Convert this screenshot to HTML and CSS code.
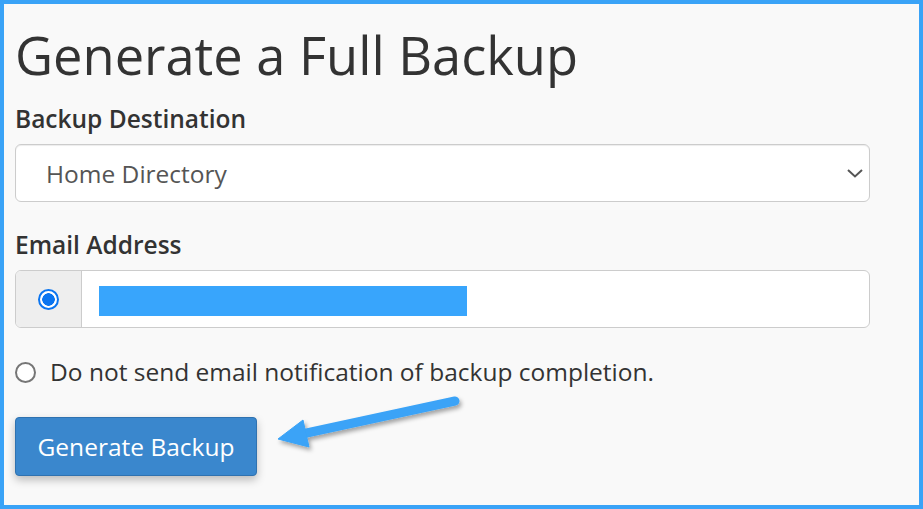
FILE: index.html
```html
<!DOCTYPE html>
<html lang="en">
<head>
    <meta charset="UTF-8">
    <meta name="viewport" content="width=device-width, initial-scale=1.0">
    <title>Generate a Full Backup</title>
    <link rel="stylesheet" href="styles.css">
</head>
<body>
    <div class="frame">
        <h1 class="title">Generate a Full Backup</h1>

        <form class="backup-form" onsubmit="return false;">
            <label class="field-label first" for="dest">Backup Destination</label>
            <div class="select-wrap">
                <select id="dest" class="select-box">
                    <option>Home Directory</option>
                </select>
                <svg class="chevron" width="16" height="9" viewBox="0 0 16 9">
                    <path d="M1 1 L8 7.5 L15 1" fill="none" stroke="#555" stroke-width="2"/>
                </svg>
            </div>

            <label class="field-label" for="email">Email Address</label>
            <div class="input-group">
                <span class="addon">
                    <span class="radio checked"></span>
                </span>
                <div class="email-field">
                    <span class="redacted"></span>
                </div>
            </div>

            <div class="radio-row">
                <span class="radio"></span>
                <span class="radio-text">Do not send email notification of backup completion.</span>
            </div>

            <button type="submit" class="btn-primary">Generate Backup</button>
        </form>

        <!-- callout arrow -->
        <svg class="callout" width="923" height="509" viewBox="0 0 923 509">
            <defs>
                <filter id="shadow" x="-20%" y="-50%" width="140%" height="200%">
                    <feDropShadow dx="2" dy="3" stdDeviation="2" flood-color="#000" flood-opacity="0.35"/>
                </filter>
            </defs>
            <g filter="url(#shadow)" fill="#3aa3f7" stroke="#3aa3f7">
                <line x1="455" y1="401" x2="302" y2="434" stroke-width="9" stroke-linecap="round"/>
                <polygon points="278,439 303,420 309,447" stroke-width="1" stroke-linejoin="round"/>
            </g>
        </svg>
    </div>
</body>
</html>
```

FILE: styles.css
```css
* {
    box-sizing: border-box;
}

body {
    margin: 0;
    font-family: "Open Sans", "Noto Sans", Arial, sans-serif;
    color: #333;
}

.frame {
    position: relative;
    width: 923px;
    height: 509px;
    border: 4px solid #3aa3f7;
    background-color: #f9f9f9;
    padding: 0 49px 0 11px;
    overflow: hidden;
}

.title {
    margin: 22px 0 0 0;
    font-size: 52.4px;
    font-weight: 400;
    line-height: 57px;
    color: #333;
}

.backup-form {
    display: flex;
    flex-direction: column;
    align-items: flex-start;
}

.field-label {
    font-size: 24.5px;
    font-weight: 600;
    line-height: 30px;
    margin-top: 28px;
    margin-bottom: 10px;
}

.field-label.first {
    margin-top: 21px;
}

.select-wrap {
    position: relative;
    width: 100%;
}

.select-box {
    appearance: none;
    -webkit-appearance: none;
    display: block;
    width: 100%;
    height: 58px;
    padding: 0 30px;
    font-family: inherit;
    font-size: 24.5px;
    color: #555;
    background-color: #fff;
    border: 1px solid #ccc;
    border-radius: 6px;
    box-shadow: inset 0 1px 1px rgba(0, 0, 0, 0.075);
}

.chevron {
    position: absolute;
    right: 7px;
    top: 25px;
}

.input-group {
    display: flex;
    width: 100%;
    height: 58px;
    border: 1px solid #ccc;
    border-radius: 6px;
    overflow: hidden;
    background-color: #fff;
}

.addon {
    width: 66px;
    display: flex;
    align-items: center;
    justify-content: center;
    background-color: #eee;
    border-right: 1px solid #ccc;
}

.email-field {
    flex: 1;
    display: flex;
    align-items: center;
    padding: 4px 0 0 17px;
}

.redacted {
    display: block;
    width: 368px;
    height: 30px;
    background-color: #38a5fc;
}

.radio {
    display: inline-block;
    width: 21px;
    height: 21px;
    border-radius: 50%;
    border: 2px solid #767676;
    background-color: #fff;
}

.radio.checked {
    border-color: #0b75f0;
    background: radial-gradient(circle, #0b75f0 0 6px, #fff 6.5px);
}

.radio-row {
    display: flex;
    align-items: center;
    gap: 14px;
    margin-top: 29px;
}

.radio-text {
    font-size: 24.5px;
    line-height: 30px;
}

.btn-primary {
    margin-top: 30px;
    width: 242px;
    height: 59px;
    font-family: inherit;
    font-size: 24.5px;
    color: #fff;
    background-color: #3a87cd;
    border: 1px solid #2f72b0;
    border-radius: 4px;
    box-shadow: 0 4px 8px rgba(0, 0, 0, 0.25);
    cursor: pointer;
}

.callout {
    position: absolute;
    left: -4px;
    top: -4px;
    pointer-events: none;
}
```
